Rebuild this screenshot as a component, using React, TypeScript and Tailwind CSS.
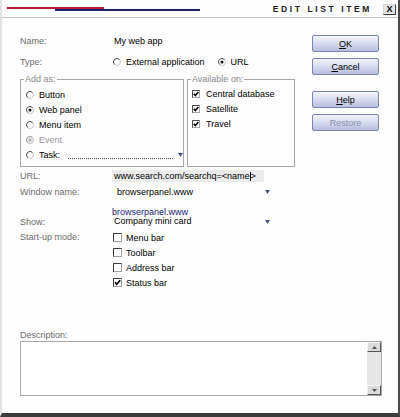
import clsx from 'clsx'

function Radio({ on, disabled }: { on?: boolean; disabled?: boolean }) {
  return (
    <svg width="8" height="8" viewBox="0 0 8 8" className="shrink-0">
      <circle cx="4" cy="4" r="3.5" fill={disabled ? '#ececec' : '#fff'} stroke="#c4c4c4" />
      <path d="M1.5 6.5A3.5 3.5 0 0 1 6.5 1.5" fill="none" stroke={disabled ? '#a8a8a8' : '#5c5c5c'} />
      {on && <circle cx="4" cy="4" r="1.5" fill="#111" />}
      {disabled && <circle cx="4" cy="4" r="1.5" fill="#b0b0b0" />}
    </svg>
  )
}

function Box({ on, size }: { on?: boolean; size: number }) {
  return (
    <svg width={size} height={size} viewBox="0 0 9 9" className="shrink-0">
      <rect x="0.5" y="0.5" width="8" height="8" fill="#fff" stroke="#a0a0a0" />
      <path d="M0.5 8.5V0.5H8.5" fill="none" stroke="#3c3c3c" />
      {on && <path d="M2 4.3L3.7 6.3L7.2 2.2" fill="none" stroke="#000" strokeWidth="1.7" />}
    </svg>
  )
}

function Caret() {
  return (
    <svg width="5" height="4" viewBox="0 0 5 4" className="shrink-0">
      <path d="M0 0H5L2.5 4Z" fill="#4b5585" />
    </svg>
  )
}

function Btn({ children, disabled }: { children: React.ReactNode; disabled?: boolean }) {
  return (
    <div
      className={clsx(
        'h-[17px] flex items-center justify-center rounded-[2px] border border-[#7b86b2] bg-linear-to-b from-[#f6f7fc] to-[#b8bfde]',
        disabled ? 'text-[#8a90aa]' : 'text-black'
      )}
    >
      {children}
    </div>
  )
}

export default function App() {
  const addAs = [
    { label: 'Button' },
    { label: 'Web panel', on: true },
    { label: 'Menu item' },
    { label: 'Event', disabled: true },
  ]
  const startup = [
    { label: 'Menu bar' },
    { label: 'Toolbar' },
    { label: 'Address bar' },
    { label: 'Status bar', on: true },
  ]

  return (
    <div className="w-[400px] h-[417px] flex flex-col bg-[#fdfdfd] border-l-2 border-l-[#e2e2e2] border-r-2 border-r-[#4a4a4a] border-b-4 border-b-[#3c3c3c] font-['Liberation_Sans',Arial,sans-serif] text-[9px] leading-[12px] text-black">
      {/* Title bar */}
      <div className="h-[18px] shrink-0 flex border-b border-[#c4c4c4]">
        <div className="pl-[5px] pt-[7px]">
          <div className="w-[97px] h-[2px] bg-[#b81e3c]" />
          <div className="ml-[48px] w-[145px] h-[2px] bg-[#1c2266]" />
        </div>
        <div className="flex-1" />
        <span className="mt-[3px] font-bold tracking-[2.6px] text-[8.5px] leading-[12px] text-[#222]">EDIT LIST ITEM</span>
        <div className="ml-[11px] mr-[2px] mt-[4px] w-[13px] h-[11px] flex items-center justify-center border border-[#d8d8d8] border-r-[#3a3a3a] border-b-[#3a3a3a] bg-[#e4e4e4] font-bold text-[9px] leading-none">
          X
        </div>
      </div>

      {/* Form + buttons */}
      <div className="flex pl-[18px]">
        <div className="w-[275px] flex flex-col">
          <div className="mt-[17px] h-[12px] flex">
            <span className="w-[94px] text-[#6c6c6c]">Name:</span>
            <span>My web app</span>
          </div>

          <div className="mt-[9px] h-[12px] flex items-center">
            <span className="w-[93px] text-[#6c6c6c]">Type:</span>
            <Radio />
            <span className="ml-[5px]">External application</span>
            <span className="ml-[13px]"><Radio on /></span>
            <span className="ml-[5px]">URL</span>
          </div>

          <div className="mt-[5px] flex gap-[3px]">
            <fieldset className="w-[164px] h-[94px] border border-[#a8a8a8]">
              <legend className="ml-[3px] px-[1px] text-[#8a8a8a]">Add as:</legend>
              <div className="pt-[2px] pl-[5px] flex flex-col">
                {addAs.map((r) => (
                  <div key={r.label} className="h-[15px] flex items-center gap-[5px]">
                    <Radio on={r.on} disabled={r.disabled} />
                    <span className={r.disabled ? 'text-[#9a9a9a]' : ''}>{r.label}</span>
                  </div>
                ))}
                <div className="h-[15px] flex items-center gap-[5px]">
                  <Radio />
                  <span>Task:</span>
                  <div className="ml-[3px] w-[105px] h-[8px] border-b border-dotted border-[#555]" />
                  <Caret />
                </div>
              </div>
            </fieldset>

            <fieldset className="w-[109px] h-[94px] border border-[#a8a8a8]">
              <legend className="ml-[3px] px-[1px] text-[#8a8a8a]">Available on:</legend>
              <div className="pt-[1px] pl-[4px] flex flex-col">
                {['Central database', 'Satellite', 'Travel'].map((t) => (
                  <div key={t} className="h-[15px] flex items-center gap-[6px]">
                    <Box on size={8} />
                    <span>{t}</span>
                  </div>
                ))}
              </div>
            </fieldset>
          </div>

          <div className="mt-[3px] h-[12px] flex items-center">
            <span className="w-[92px] text-[#6c6c6c]">URL:</span>
            <div className="w-[152px] h-[12px] pl-[2px] bg-[#ececec] flex items-center">
              www.search.com/searchq=&lt;name<span className="inline-block w-px h-[9px] bg-black" />&gt;
            </div>
          </div>

          <div className="mt-[4px] h-[12px] flex items-center">
            <span className="w-[97px] text-[#6c6c6c]">Window name:</span>
            <span className="w-[148px]">browserpanel.www</span>
            <Caret />
          </div>

          <div className="mt-[10px] flex items-end">
            <span className="w-[92px] h-[10px] leading-[10px] text-[#6c6c6c]">Show:</span>
            <div className="w-[153px] flex flex-col leading-[9px]">
              <span className="h-[9px] text-[#22227a]">browserpanel.www</span>
              <span className="h-[10px] pl-[2px]">Company mini card</span>
            </div>
            <span className="mb-[3px]"><Caret /></span>
          </div>

          <div className="mt-[3px] flex">
            <span className="w-[93px] h-[15px] leading-[15px] text-[#6c6c6c]">Start-up mode:</span>
            <div className="flex flex-col">
              {startup.map((c) => (
                <div key={c.label} className="h-[15px] flex items-center gap-[4px]">
                  <Box on={c.on} size={9} />
                  <span>{c.label}</span>
                </div>
              ))}
            </div>
          </div>
        </div>

        <div className="ml-[17px] w-[67px] pt-[17px] flex flex-col">
          <Btn><span><u>O</u>K</span></Btn>
          <div className="mt-[6px]"><Btn><span><u>C</u>ancel</span></Btn></div>
          <div className="mt-[16px]"><Btn><span><u>H</u>elp</span></Btn></div>
          <div className="mt-[6px]"><Btn disabled>Restore</Btn></div>
        </div>
      </div>

      {/* Description */}
      <div className="pl-[18px] mt-[39px]">
        <div className="h-[12px] text-[#6c6c6c]">Description:</div>
        <div className="w-[362px] h-[55px] flex border border-[#a8a8a8] bg-white">
          <div className="flex-1" />
          <div className="w-[14px] flex flex-col bg-[#e6e6e6]">
            <div className="h-[10px] flex items-center justify-center bg-[#dcdcdc] border border-[#f4f4f4] border-r-[#555] border-b-[#555]">
              <svg width="5" height="3" viewBox="0 0 5 3"><path d="M0 3H5L2.5 0Z" fill="#555" /></svg>
            </div>
            <div className="flex-1" />
            <div className="h-[10px] flex items-center justify-center bg-[#dcdcdc] border border-[#f4f4f4] border-r-[#555] border-b-[#555]">
              <svg width="5" height="3" viewBox="0 0 5 3"><path d="M0 0H5L2.5 3Z" fill="#555" /></svg>
            </div>
          </div>
        </div>
      </div>
    </div>
  )
}
